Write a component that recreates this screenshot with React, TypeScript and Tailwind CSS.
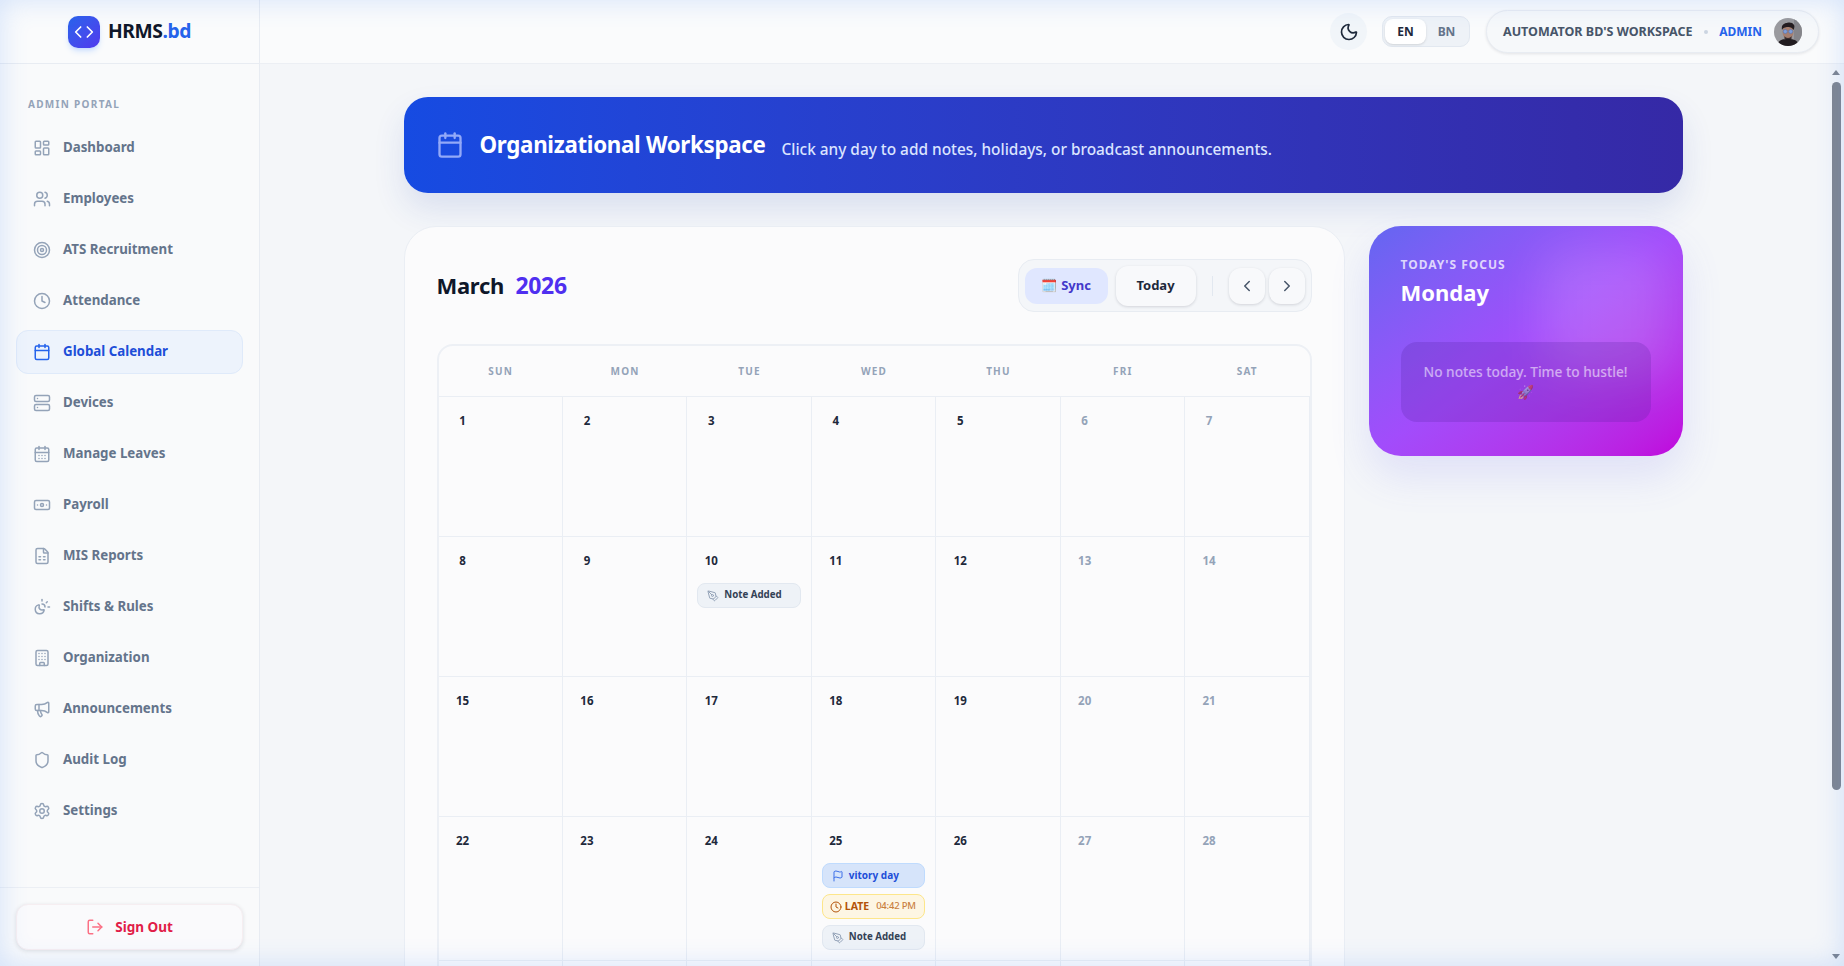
import {
  Banknote,
  Building,
  Calendar,
  CalendarDays,
  ChevronLeft,
  ChevronRight,
  Clock,
  Code,
  FileSpreadsheet,
  Flag,
  LayoutDashboard,
  LogOut,
  Megaphone,
  Moon,
  PenTool,
  Server,
  Settings,
  Shield,
  SunMoon,
  Target,
  Users,
} from "lucide-react";

const navItems = [
  { label: "Dashboard", icon: LayoutDashboard },
  { label: "Employees", icon: Users },
  { label: "ATS Recruitment", icon: Target },
  { label: "Attendance", icon: Clock },
  { label: "Global Calendar", icon: Calendar, active: true },
  { label: "Devices", icon: Server },
  { label: "Manage Leaves", icon: CalendarDays },
  { label: "Payroll", icon: Banknote },
  { label: "MIS Reports", icon: FileSpreadsheet },
  { label: "Shifts & Rules", icon: SunMoon },
  { label: "Organization", icon: Building },
  { label: "Announcements", icon: Megaphone },
  { label: "Audit Log", icon: Shield },
  { label: "Settings", icon: Settings },
];

const weekDays = ["SUN", "MON", "TUE", "WED", "THU", "FRI", "SAT"];

function NoteChip() {
  return (
    <div className="flex h-[25px] items-center gap-[5px] rounded-lg border border-[#e2e8f0] bg-[#eef2f7] px-[9px] text-[9.700px] font-bold text-[#334155]">
      <PenTool className="h-3 w-3 shrink-0 text-[#94a3b8]" />
      <span>Note Added</span>
    </div>
  );
}

function Sidebar() {
  return (
    <aside className="flex h-full w-[260px] shrink-0 flex-col border-r border-[#e8ecf2] bg-[#f9fafb]">
      <div className="flex h-16 shrink-0 items-center justify-center gap-2 border-b border-[#e8ecf2] bg-[#fafbfc]">
        <div className="flex h-8 w-8 items-center justify-center rounded-[10px] bg-gradient-to-br from-[#2563eb] to-[#4f38ee] text-white shadow-md shadow-blue-500/20">
          <Code className="h-5 w-5" strokeWidth={2} />
        </div>
        <span className="text-[19.300px] font-bold tracking-[-0.4px] text-[#0f172a]">
          HRMS<span className="text-[#2563eb]">.bd</span>
        </span>
      </div>

      <nav className="flex-1 px-4 pt-8">
        <div className="mb-[14px] pl-3 text-[10px] leading-4 font-bold tracking-[1.3px] text-[#94a3b8]">ADMIN PORTAL</div>
        <div className="flex flex-col gap-[7px]">
          {navItems.map(item => (
            <div
              key={item.label}
              className={
                item.active
                  ? "flex h-11 items-center gap-3 rounded-xl border border-[#dfeafa] bg-[#edf3fc] px-4 text-[13.300px] font-bold text-[#1d4ed8]"
                  : "flex h-11 items-center gap-3 rounded-xl border border-transparent px-4 text-[13.300px] font-bold text-[#64748b]"
              }
            >
              <item.icon className={item.active ? "h-[18px] w-[18px] text-[#2563eb]" : "h-[18px] w-[18px] text-[#94a3b8]"} />
              <span>{item.label}</span>
            </div>
          ))}
        </div>
      </nav>

      <div className="shrink-0 border-t border-[#eceff4] p-4">
        <button className="flex h-[46px] w-full items-center justify-center gap-[11px] rounded-xl border border-[#f6eef1] bg-[#fafafc] text-[13.500px] font-bold text-[#e11d48] shadow-[0_1px_4px_rgba(15,23,42,0.12)]">
          <LogOut className="h-[18px] w-[18px] text-[#fb7185]" />
          Sign Out
        </button>
      </div>
    </aside>
  );
}

function Avatar() {
  return (
    <svg viewBox="0 0 28 28" className="h-7 w-7 rounded-full">
      <rect width="28" height="28" fill="#9a9a9e" />
      <rect x="20" width="8" height="28" fill="#85858a" />
      <path d="M3 28c1-6 5-7 11-7s10 1 11 7z" fill="#211c20" />
      <ellipse cx="14" cy="14" rx="5.5" ry="7" fill="#a67f70" />
      <path d="M8 12c-1-5 2-7 5-7 1-1 6-1 7 2 1 1 0 4-.5 5-1-2-3-3-5-3s-5 0-6.500 3z" fill="#241d20" />
      <circle cx="11.300" cy="13.500" r="2" fill="#7f9fd8" stroke="#4e6fb5" strokeWidth="0.500" />
      <circle cx="16.700" cy="13.500" r="2" fill="#7f9fd8" stroke="#4e6fb5" strokeWidth="0.500" />
      <path d="M10.500 18c1 2.500 6 2.500 7 0v3h-7z" fill="#3a2d2e" />
    </svg>
  );
}

function TopBar() {
  return (
    <header className="flex h-16 shrink-0 items-center justify-end border-b border-[#eceff4] bg-[#fafbfc] pr-[25px]">
      <button className="flex h-[37px] w-[37px] items-center justify-center rounded-full bg-[#f1f5f9] text-[#1e293b]">
        <Moon className="h-5 w-5" />
      </button>
      <div className="ml-[15px] flex h-[31px] items-center rounded-[10px] border border-[#e2e8f0] bg-[#eef2f7] p-[2px] text-[12px] font-bold">
        <span className="flex h-[25px] w-[41px] items-center justify-center rounded-lg bg-white text-[#1e293b] shadow-sm">EN</span>
        <span className="flex h-[25px] w-[41px] items-center justify-center text-[#64748b]">BN</span>
      </div>
      <div className="ml-4 flex h-[43px] w-[333px] items-center rounded-full border border-[#e8ecf2] bg-[#f6f8fa] pr-4 pl-4 shadow-[0_1px_3px_rgba(15,23,42,0.1)]">
        <span className="text-[12.500px] leading-4 font-bold text-[#475569]">AUTOMATOR BD'S WORKSPACE</span>
        <span className="mx-auto h-1 w-1 rounded-full bg-[#cbd5e1]" />
        <span className="text-[12px] leading-4 font-bold text-[#2563eb]">ADMIN</span>
        <span className="ml-3 shrink-0">
          <Avatar />
        </span>
      </div>
    </header>
  );
}

function DayCell({ day, muted, children }: { day: number | null; muted?: boolean; children?: React.ReactNode }) {
  return (
    <div className="border-r border-b border-[#eaeef4] p-2.5">
      {day !== null && (
        <div className={muted ? "flex h-7 w-7 items-center justify-center text-[11.500px] font-bold text-[#94a3b8]" : "flex h-7 w-7 items-center justify-center text-[11.500px] font-bold text-[#1e293b]"}>
          {day}
        </div>
      )}
      {children && <div className="mt-2 flex flex-col gap-1.5">{children}</div>}
    </div>
  );
}

function CalendarCard() {
  // the last row sits below the fold, only its top border shows
  const cells: (number | null)[] = [];
  for (let d = 1; d <= 28; d++) cells.push(d);
  while (cells.length < 35) cells.push(null);

  return (
    <section className="min-w-0 flex-1 rounded-[32px] border border-[#eaeef4] bg-[#fbfbfc] p-8">
      <div className="mb-8 flex h-[53px] items-center justify-between">
        <h2 className="text-[22px] font-bold tracking-[-0.3px] text-[#0f172a]">
          March <span className="ml-[6px] text-[23px] text-[#4f2ff0]">2026</span>
        </h2>
        <div className="flex h-[53px] w-[294px] items-center rounded-2xl border border-[#e8ecf2] bg-[#f4f6f9] pl-[6px]">
          <button className="flex h-9 w-[83px] items-center justify-center gap-1 rounded-xl bg-[#e0e7ff] text-[13px] font-bold text-[#4338ca]">
            <span>🗓️</span> Sync
          </button>
          <button className="ml-2 flex h-10 w-20 items-center justify-center rounded-xl bg-[#f8f9fb] text-[13px] font-bold text-[#1e293b] shadow-[0_1px_3px_rgba(15,23,42,0.15)]">
            Today
          </button>
          <span className="mx-4 h-5 w-px bg-[#e2e8f0]" />
          <button className="flex h-9 w-9 items-center justify-center rounded-xl bg-[#f8f9fb] text-[#475569] shadow-[0_1px_3px_rgba(15,23,42,0.15)]">
            <ChevronLeft className="h-[18px] w-[18px]" />
          </button>
          <button className="ml-1 flex h-9 w-9 items-center justify-center rounded-xl bg-[#f8f9fb] text-[#475569] shadow-[0_1px_3px_rgba(15,23,42,0.15)]">
            <ChevronRight className="h-[18px] w-[18px]" />
          </button>
        </div>
      </div>

      <div className="overflow-hidden rounded-2xl border-2 border-[#edf0f5]">
        <div className="grid h-[51px] grid-cols-7 border-b border-[#eaeef4]">
          {weekDays.map(d => (
            <div key={d} className="flex items-center justify-center text-[10px] font-bold tracking-[1.200px] text-[#94a3b8]">
              {d}
            </div>
          ))}
        </div>
        <div className="grid auto-rows-[minmax(140px,auto)] grid-cols-7">
          {cells.map((day, i) => {
            const muted = i % 7 >= 5;
            if (day === 10) {
              return (
                <DayCell key={i} day={day}>
                  <NoteChip />
                </DayCell>
              );
            }
            if (day === 25) {
              return (
                <DayCell key={i} day={day}>
                  <div className="flex h-[25px] items-center gap-[5px] rounded-lg border border-[#bfdbfe] bg-[#d6e4fa] px-[9px] text-[10px] font-bold text-[#1d4ed8]">
                    <Flag className="h-3 w-3 shrink-0 text-[#3b6fe8]" />
                    vitory day
                  </div>
                  <div className="flex h-[25px] items-center gap-[3px] rounded-lg border border-[#fde68a] bg-[#fdf6e3] px-[7px] text-[10.500px] font-bold whitespace-nowrap text-[#b45309]">
                    <Clock className="h-3 w-3 shrink-0" />
                    LATE
                    <span className="ml-1 text-[9.500px] font-medium tracking-[-0.2px] text-[#c9803f]">04:42 PM</span>
                  </div>
                  <NoteChip />
                </DayCell>
              );
            }
            return <DayCell key={i} day={day} muted={muted} />;
          })}
        </div>
      </div>
    </section>
  );
}

function FocusCard() {
  return (
    <aside className="relative h-[230px] w-[314px] shrink-0 rounded-[32px] bg-gradient-to-br from-[#6366f1] via-[#a24cfb] to-[#c000dc] p-8 pt-[31px] text-white shadow-[0_20px_40px_rgba(99,102,241,0.14)]">
      <div className="absolute top-6 right-3 h-32 w-32 rounded-3xl bg-white/15 blur-xl" />
      <div className="relative text-[12px] leading-4 font-bold tracking-[1px] text-white/75">TODAY'S FOCUS</div>
      <div className="relative mt-[3px] text-[22px] leading-8 font-bold">Monday</div>
      <div className="relative mt-[34px] h-20 rounded-2xl bg-[#4c1d95]/20 px-5 py-5 text-center text-[13.700px] leading-5 font-medium text-white/55">
        No notes today. Time to hustle! <span className="block">🚀</span>
      </div>
    </aside>
  );
}

function ScrollRail() {
  return (
    <div className="relative w-[18px] shrink-0">
      <div className="absolute top-[6px] left-[6px] h-0 w-0 border-x-[4.500px] border-b-[5px] border-x-transparent border-b-[#7f8590]" />
      <div className="absolute top-[18px] left-[6px] h-[708px] w-[9px] rounded-full bg-[#808691]" />
      <div className="absolute bottom-[7px] left-[6px] h-0 w-0 border-x-[4.500px] border-t-[5px] border-x-transparent border-t-[#7f8590]" />
    </div>
  );
}

export default function App() {
  return (
    <div className="relative flex h-screen overflow-hidden bg-[#f4f6f9] font-['Noto_Sans',sans-serif]">
      <Sidebar />
      <div className="flex min-w-0 flex-1 flex-col">
        <TopBar />
        <main className="flex min-h-0 flex-1">
          <div className="min-w-0 flex-1 overflow-hidden">
            <div className="mx-auto w-[1279px] pt-[33px]">
              <div className="flex h-24 items-center gap-4 rounded-3xl bg-gradient-to-r from-[#164be2] to-[#3529a6] px-8 shadow-[0_16px_32px_rgba(30,64,175,0.12)]">
                <Calendar className="h-7 w-7 shrink-0 text-[#93a9f8]" />
                <h1 className="text-[22.300px] font-bold tracking-[-0.3px] text-white">Organizational Workspace</h1>
                <p className="mt-[9px] text-[15.400px] font-medium text-[#dbe4ff]">Click any day to add notes, holidays, or broadcast announcements.</p>
              </div>
              <div className="mt-[33px] flex items-start gap-6">
                <CalendarCard />
                <FocusCard />
              </div>
            </div>
          </div>
          <ScrollRail />
        </main>
      </div>
      {/* soft blue glow around the window edge */}
      <div className="pointer-events-none absolute inset-0 shadow-[inset_0_0_28px_rgba(59,130,246,0.2)]" />
    </div>
  );
}
